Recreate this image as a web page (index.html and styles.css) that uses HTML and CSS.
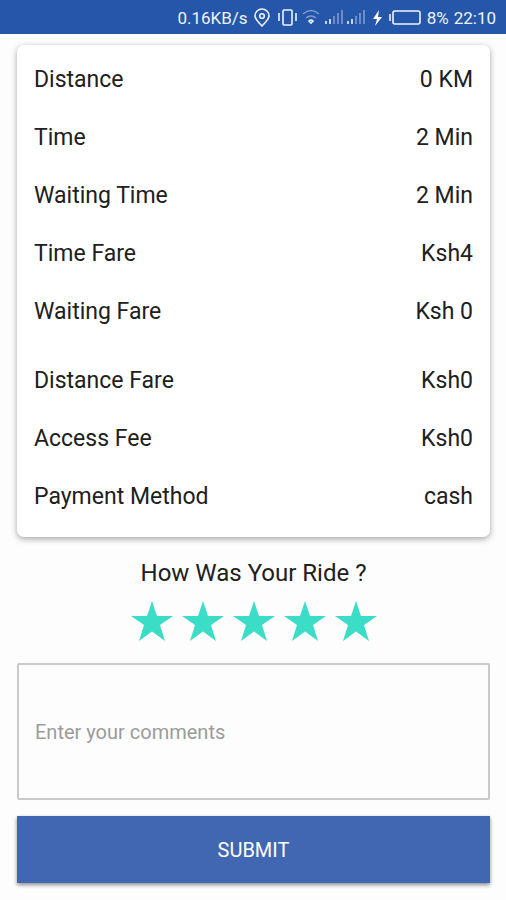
FILE: index.html
```html
<!DOCTYPE html>
<html lang="en">
<head>
<meta charset="utf-8">
<title>Ride summary</title>
<link rel="stylesheet" href="styles.css">
</head>
<body>
<header class="status">
  <span class="speed">0.16KB/s</span>
  <svg class="icons" width="171" height="24" viewBox="252 6 171 24" fill="none" stroke="#eef3ff" stroke-width="1.6">
    <path d="M262 26c-4-4-7-7-7-10a7 7 0 0 1 14 0c0 3-3 6-7 10z"/><circle cx="262" cy="16" r="2.3"/>
    <rect x="283" y="10" width="9" height="15" rx="1"/><path d="M279 13v8M296 13v8"/>
    <g stroke="#7f9bd2"><path d="M303 14q8-7 16 0M306 18q5-4 10 0"/></g><path d="M309 21q2-2 4 0l-2 2z"/>
    <path d="M326 24v-3M330 24v-5M348 24v-3M352 24v-5"/><path stroke="#7f9bd2" d="M334 24v-8M338 24v-11M342 24v-14M356 24v-8M360 24v-11M364 24v-14"/>
    <path fill="#fff" stroke="none" d="M379 10l-6 9h4l-2 7 7-9h-4z"/>
    <rect x="393" y="11" width="27" height="13" rx="2"/><path d="M390 14v7"/>
  </svg>
  <span class="percent">8%</span><span class="clock">22:10</span>
</header>
<main>
  <dl class="card">
    <div class="row"><dt>Distance</dt><dd>0 KM</dd></div>
    <div class="row"><dt>Time</dt><dd>2 Min</dd></div>
    <div class="row"><dt>Waiting Time</dt><dd>2 Min</dd></div>
    <div class="row"><dt>Time Fare</dt><dd>Ksh4</dd></div>
    <div class="row gap"><dt>Waiting Fare</dt><dd>Ksh 0</dd></div>
    <div class="row"><dt>Distance Fare</dt><dd>Ksh0</dd></div>
    <div class="row"><dt>Access Fee</dt><dd>Ksh0</dd></div>
    <div class="row"><dt>Payment Method</dt><dd>cash</dd></div>
  </dl>
  <h1>How Was Your Ride ?</h1>
  <div class="stars">
    <svg viewBox="0 0 42 40"><path d="M21 0l5 15h16L29 24l5 16-13-9.500L8 40l5-16L0 15h16z"/></svg>
    <svg viewBox="0 0 42 40"><path d="M21 0l5 15h16L29 24l5 16-13-9.500L8 40l5-16L0 15h16z"/></svg>
    <svg viewBox="0 0 42 40"><path d="M21 0l5 15h16L29 24l5 16-13-9.500L8 40l5-16L0 15h16z"/></svg>
    <svg viewBox="0 0 42 40"><path d="M21 0l5 15h16L29 24l5 16-13-9.500L8 40l5-16L0 15h16z"/></svg>
    <svg viewBox="0 0 42 40"><path d="M21 0l5 15h16L29 24l5 16-13-9.500L8 40l5-16L0 15h16z"/></svg>
  </div>
  <div class="comments">Enter your comments</div>
  <button class="submit">SUBMIT</button>
</main>
</body>
</html>
```
FILE: styles.css
```css
* { box-sizing: border-box; }
body { margin: 0; height: 900px; background: #fdfdfd; font-family: Roboto, sans-serif; color: #202020; overflow: hidden; }
.status { height: 34px; padding: 2px 10px 0 0; background: #2457a9; color: #eef3ff; display: flex; align-items: center; justify-content: flex-end; font-size: 17px; white-space: nowrap; }
.speed { margin-right: 4px; }
.icons { flex: none; margin-right: 4px; }
.percent { margin-right: 5px; }
main { padding: 11px 16px 0 17px; }
.card { margin: 0; height: 492px; padding: 5px 17px 0; border-radius: 7px; background: #fff; box-shadow: 0 2px 6px rgba(0,0,0,.35); }
.row { height: 58.2px; display: flex; align-items: center; justify-content: space-between; font-size: 23px; }
.row.gap { margin-bottom: 10px; }
dd { margin: 0; }
h1 { margin: 20px 0 0; text-align: center; font-size: 24px; line-height: 32px; font-weight: 400; }
.stars { display: flex; justify-content: center; gap: 9px; margin-top: 12px; }
.stars svg { width: 42px; height: 40px; fill: #3bddc7; }
.comments { margin-top: 22px; height: 137px; border: 2px solid #c9c9c9; border-radius: 2px; padding: 0 16px; display: flex; align-items: center; color: #9b9b9b; font-size: 20px; }
.submit { display: block; width: 100%; height: 67px; margin-top: 16px; border: 0; background: #4267b2; color: #fff; font: 20px Roboto, sans-serif; box-shadow: 0 2px 4px rgba(0,0,0,.45); }
```
